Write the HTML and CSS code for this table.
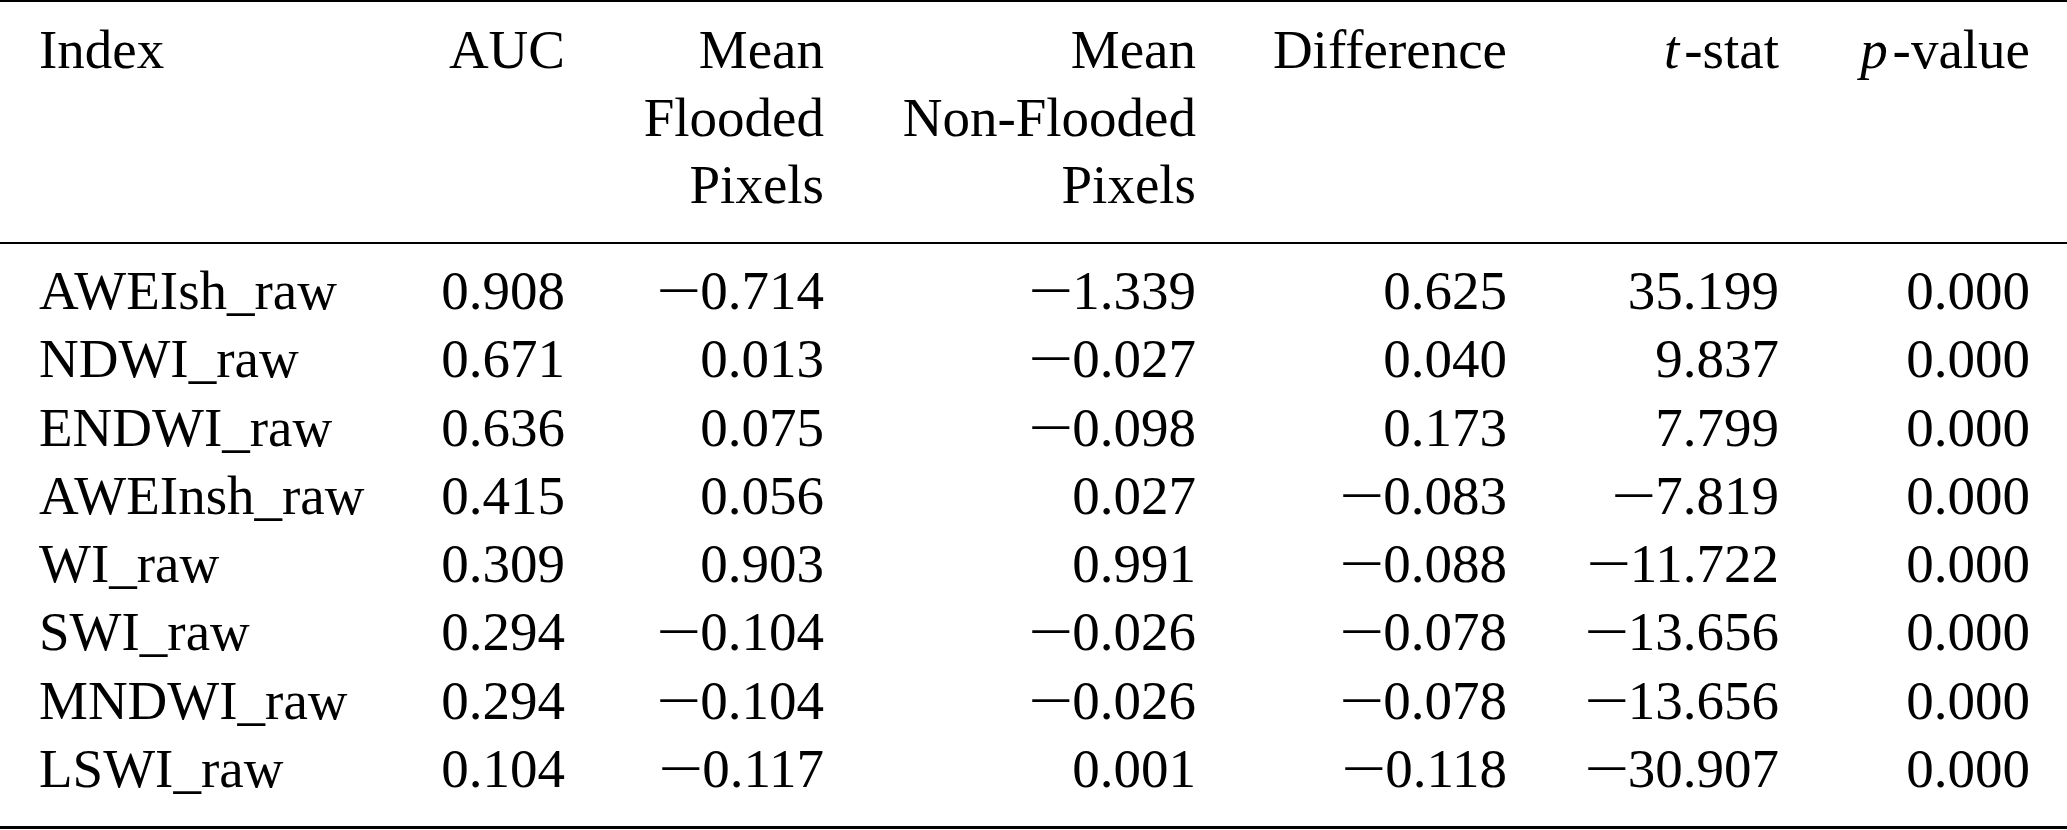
FILE: index.html
```html
<!DOCTYPE html>
<html lang="en">
<head>
<meta charset="utf-8">
<title>Index comparison table</title>
<link rel="stylesheet" href="styles.css">
</head>
<body>
<div class="tbl">
  <div class="head">
    <div class="cell first">Index</div>
    <div class="cell">AUC</div>
    <div class="cell">Mean<br>Flooded<br>Pixels</div>
    <div class="cell">Mean<br>Non-Flooded<br>Pixels</div>
    <div class="cell">Difference</div>
    <div class="cell"><i class="mi">t</i>-stat</div>
    <div class="cell"><i class="mi">p</i>-value</div>
  </div>
  <div class="body">
    <div class="cell first">AWEIsh_raw</div><div class="cell">0.908</div><div class="cell"><span class="neg">−</span>0.714</div><div class="cell"><span class="neg">−</span>1.339</div><div class="cell">0.625</div><div class="cell">35.199</div><div class="cell">0.000</div>
    <div class="cell first">NDWI_raw</div><div class="cell">0.671</div><div class="cell">0.013</div><div class="cell"><span class="neg">−</span>0.027</div><div class="cell">0.040</div><div class="cell">9.837</div><div class="cell">0.000</div>
    <div class="cell first">ENDWI_raw</div><div class="cell">0.636</div><div class="cell">0.075</div><div class="cell"><span class="neg">−</span>0.098</div><div class="cell">0.173</div><div class="cell">7.799</div><div class="cell">0.000</div>
    <div class="cell first">AWEInsh_raw</div><div class="cell">0.415</div><div class="cell">0.056</div><div class="cell">0.027</div><div class="cell"><span class="neg">−</span>0.083</div><div class="cell"><span class="neg">−</span>7.819</div><div class="cell">0.000</div>
    <div class="cell first">WI_raw</div><div class="cell">0.309</div><div class="cell">0.903</div><div class="cell">0.991</div><div class="cell"><span class="neg">−</span>0.088</div><div class="cell"><span class="neg">−</span>11.722</div><div class="cell">0.000</div>
    <div class="cell first">SWI_raw</div><div class="cell">0.294</div><div class="cell"><span class="neg">−</span>0.104</div><div class="cell"><span class="neg">−</span>0.026</div><div class="cell"><span class="neg">−</span>0.078</div><div class="cell"><span class="neg">−</span>13.656</div><div class="cell">0.000</div>
    <div class="cell first">MNDWI_raw</div><div class="cell">0.294</div><div class="cell"><span class="neg">−</span>0.104</div><div class="cell"><span class="neg">−</span>0.026</div><div class="cell"><span class="neg">−</span>0.078</div><div class="cell"><span class="neg">−</span>13.656</div><div class="cell">0.000</div>
    <div class="cell first">LSWI_raw</div><div class="cell">0.104</div><div class="cell"><span class="neg">−</span>0.117</div><div class="cell">0.001</div><div class="cell"><span class="neg">−</span>0.118</div><div class="cell"><span class="neg">−</span>30.907</div><div class="cell">0.000</div>
  </div>
</div>
</body>
</html>
```

FILE: styles.css
```css
html, body {
  margin: 0;
  padding: 0;
  background: #ffffff;
}

body {
  font-family: "Liberation Serif", "Times New Roman", serif;
  font-size: 55px;
  color: #000000;
}

.tbl {
  width: 2067px;
  border-top: 2.7px solid #000;
  border-bottom: 3px solid #000;
}

.head,
.body {
  display: grid;
  grid-template-columns: 402px 200px 259px 372px 311px 272px 251px;
}

.head {
  line-height: 67.5px;
  padding: 14px 0 23.5px;
  border-bottom: 2.6px solid #000;
}

.body {
  line-height: 68.3px;
  padding: 13px 0 22.3px;
}

.cell {
  text-align: right;
  padding-right: 37px;
  white-space: nowrap;
}

.cell.first {
  text-align: left;
  padding-left: 39px;
  padding-right: 0;
}

.mi {
  font-style: italic;
  margin-right: 0.09em;
}

.neg {
  display: inline-block;
  width: 0.8em;
  text-align: left;
  transform: scaleX(1.45);
  transform-origin: 0 50%;
}
```
